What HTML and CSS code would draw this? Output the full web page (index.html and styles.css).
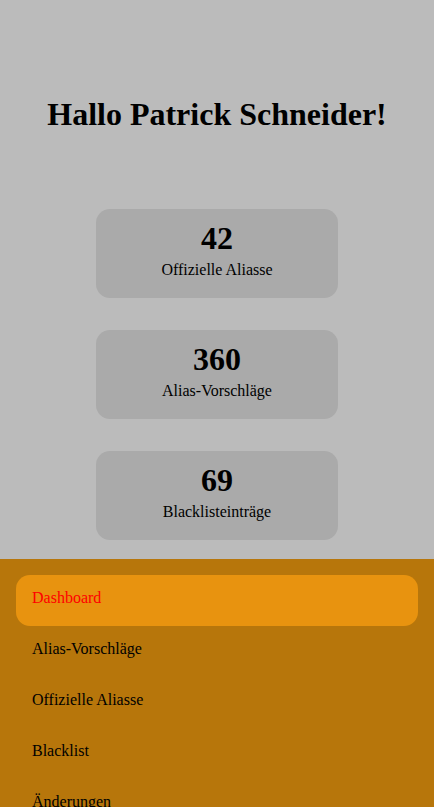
FILE: index.html
```html
<!DOCTYPE html>
<html lang="de">
<head>
<meta charset="utf-8">
<title>Dashboard</title>
<link rel="stylesheet" href="styles.css">
</head>
<body>
<main class="main">
  <h1 class="title">Hallo Patrick Schneider!</h1>
  <section class="stats">
    <div class="card"><div class="num">42</div><div class="label">Offizielle Aliasse</div></div>
    <div class="card"><div class="num">360</div><div class="label">Alias-Vorschläge</div></div>
    <div class="card"><div class="num">69</div><div class="label">Blacklisteinträge</div></div>
  </section>
</main>
<nav class="nav">
  <a class="item active">Dashboard</a>
  <a class="item">Alias-Vorschläge</a>
  <a class="item">Offizielle Aliasse</a>
  <a class="item">Blacklist</a>
  <a class="item">Änderungen</a>
</nav>
</body>
</html>
```
FILE: styles.css
```css
html, body {
  margin: 0;
  padding: 0;
}
body {
  background: #bbbbbb;
  font-family: "Liberation Serif", "Times New Roman", serif;
  font-size: 16px;
  color: #000;
  height: 807px;
  overflow: hidden;
}
.main {
  display: flex;
  flex-direction: column;
  align-items: center;
  padding-top: 96px;
}
.title {
  margin: 0;
  font-size: 32px;
  line-height: 37px;
  font-weight: bold;
}
.stats {
  display: flex;
  flex-direction: column;
  gap: 32px;
  margin-top: 76px;
  padding-bottom: 19px;
}
.card {
  width: 242px;
  height: 89px;
  box-sizing: border-box;
  background: #aaaaaa;
  border-radius: 14px;
  padding-top: 11px;
  text-align: center;
}
.num {
  font-size: 32px;
  font-weight: bold;
  line-height: 37px;
}
.label {
  margin-top: 4px;
  line-height: 18px;
}
.nav {
  background: #b7760b;
  padding: 16px;
  display: flex;
  flex-direction: column;
}
.item {
  display: block;
  height: 51px;
  line-height: 46px;
  padding-left: 16px;
  border-radius: 14px;
  color: #000;
}
.item.active {
  background: #e8930f;
  color: #ff0000;
}
```
